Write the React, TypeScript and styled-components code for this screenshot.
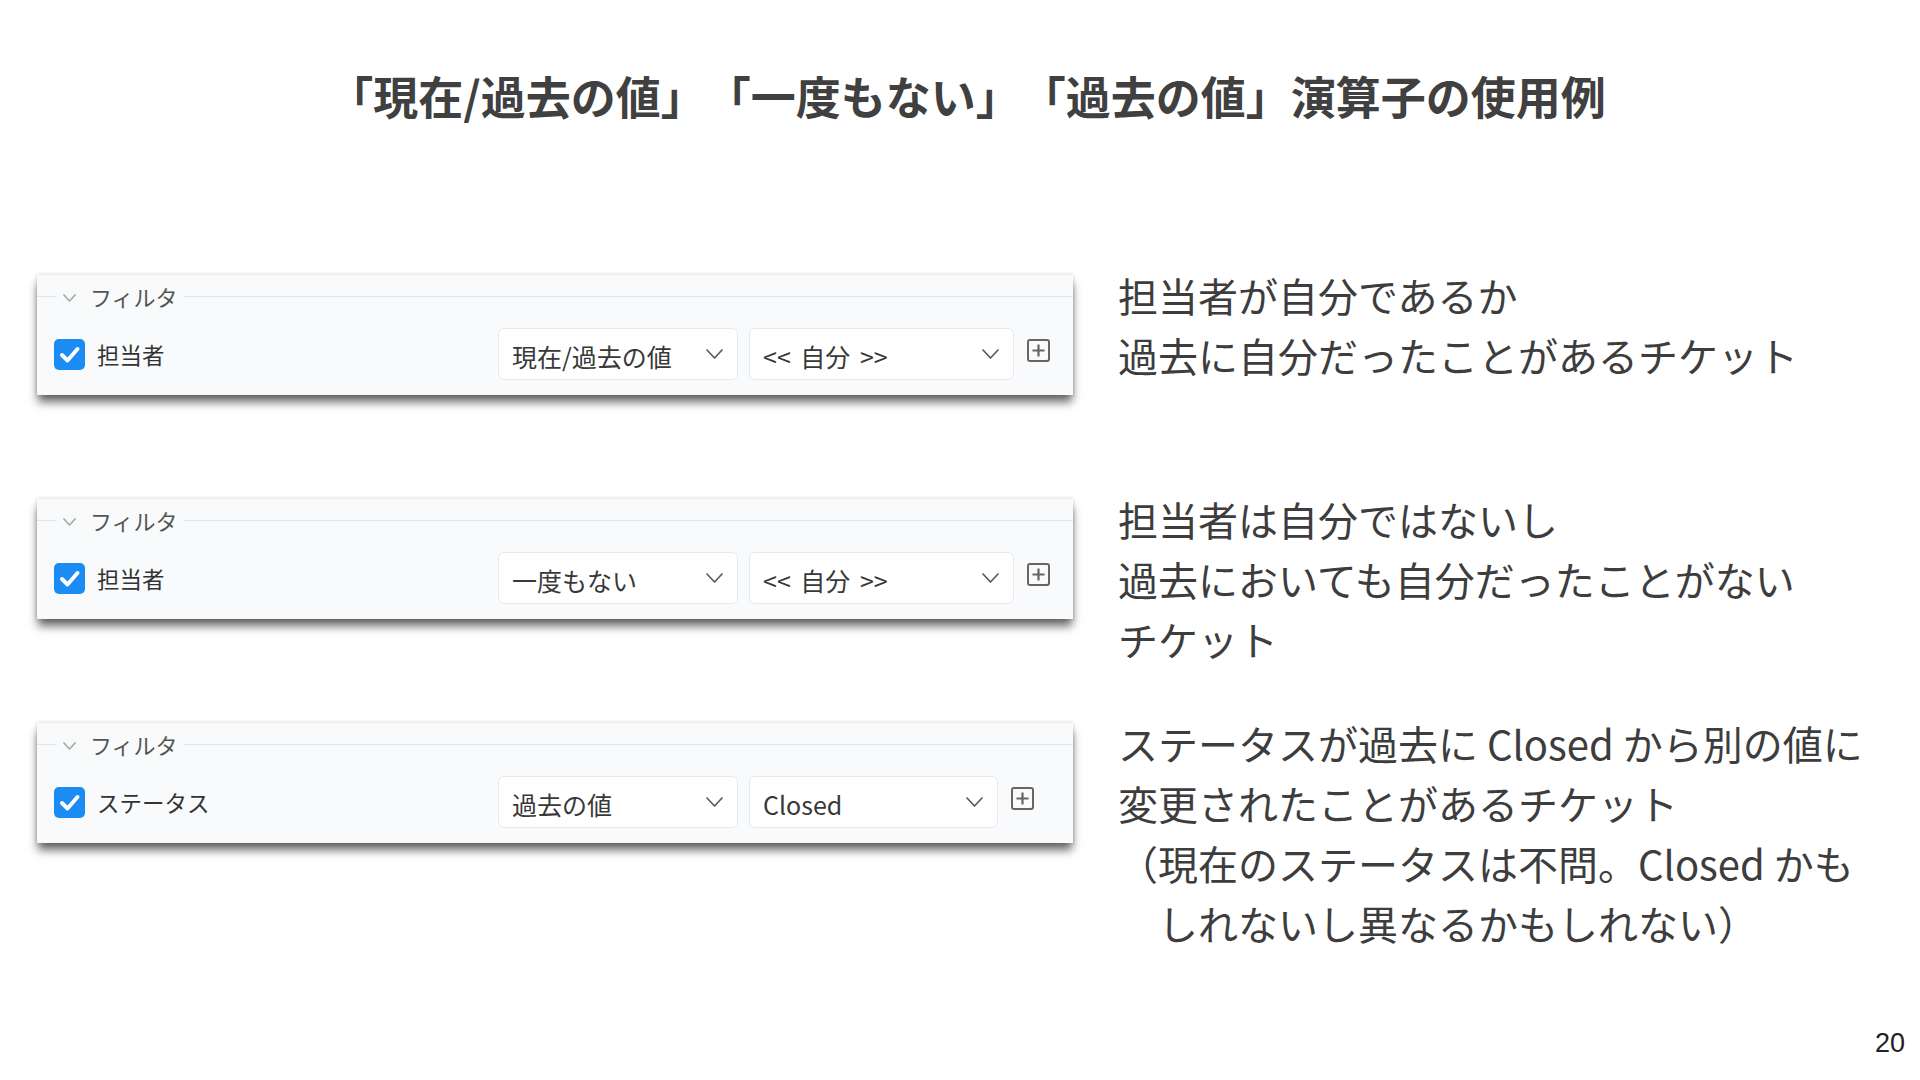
import React from "react";
import styled, { createGlobalStyle } from "styled-components";

const GlobalStyle = createGlobalStyle`
  html, body {
    margin: 0;
    padding: 0;
    background: #fff;
  }
  body {
    font-family: "Noto Sans CJK JP", "Noto Sans", sans-serif;
    color: #3b3b3b;
  }
`;

const Slide = styled.div`
  width: 1920px;
  height: 1080px;
  box-sizing: border-box;
  padding-top: 72px;
  display: flex;
  flex-direction: column;
  overflow: hidden;
`;

const Title = styled.h1`
  margin: 0;
  padding-left: 14px;
  font-size: 45px;
  line-height: 48px;
  font-weight: 700;
  color: #404040;
  text-align: center;
  white-space: nowrap;
  text-spacing-trim: space-all;
`;

const Examples = styled.div`
  margin-top: 145px;
  padding-left: 37px;
  display: grid;
  grid-template-columns: 1036px 1fr;
  grid-auto-rows: 224px;
  column-gap: 45px;
`;

const Panel = styled.div`
  margin-top: 10px;
  height: 120px;
  box-sizing: border-box;
  background: #f9fafb;
  box-shadow: 0 8px 9px -1px rgba(0, 0, 0, 0.6), 0 0 4px rgba(0, 0, 0, 0.18);
`;

const LegendRow = styled.div`
  display: flex;
  align-items: center;
  height: 22px;
  padding-top: 10px;
`;

const Rule = styled.div<{ $grow?: boolean }>`
  height: 1px;
  background: #e1e4e8;
  width: 20px;
  flex: ${(p) => (p.$grow ? "1" : "none")};
`;

const Legend = styled.div`
  display: flex;
  align-items: center;
  gap: 14px;
  padding: 0 6px;
  font-size: 22px;
  line-height: 22px;
  color: #555;
  & > svg {
    margin-top: 3px;
  }
`;

const FilterRow = styled.div`
  display: flex;
  align-items: center;
  height: 52px;
  margin-top: 21px;
  padding-left: 17px;
`;

const LabelCell = styled.label`
  width: 444px;
  flex: none;
  display: flex;
  align-items: center;
  gap: 12px;
  font-size: 22.5px;
  color: #333;
`;

const CheckBox = styled.span`
  width: 31px;
  height: 31px;
  border-radius: 5px;
  background: #1b8cf4;
  display: flex;
  align-items: center;
  justify-content: center;
`;

const Select = styled.div<{ $width: number }>`
  width: ${(p) => p.$width}px;
  height: 52px;
  box-sizing: border-box;
  flex: none;
  display: flex;
  align-items: center;
  justify-content: space-between;
  padding: 0 14px 0 13px;
  border: 1px solid #e5e9ed;
  border-radius: 6px;
  background: #fff;
  font-size: 25px;
  color: #383838;
  & + & {
    margin-left: 11px;
  }
`;

const SelectText = styled.span`
  padding-top: 4px;
  white-space: nowrap;
  word-spacing: 4px;
`;

const AddButton = styled.span`
  display: flex;
  margin-left: 13px;
  margin-top: -7px;
`;

const Description = styled.div`
  font-size: 40px;
  line-height: 60px;
  color: #3d3d3d;
  white-space: nowrap;
`;

const Footer = styled.div`
  margin-top: auto;
  padding: 0 15px 23px 0;
  text-align: right;
  font-family: "Liberation Sans", Arial, sans-serif;
  font-size: 27px;
  line-height: 27px;
  color: #222;
`;

const Chevron = ({ w, h, color }: { w: number; h: number; color: string }) => (
  <svg width={w} height={h} viewBox={`0 0 ${w} ${h}`} fill="none">
    <path
      d={`M1 1 L${w / 2} ${h - 1} L${w - 1} 1`}
      stroke={color}
      strokeWidth={1.7}
      strokeLinecap="round"
      strokeLinejoin="round"
    />
  </svg>
);

const CheckMark = () => (
  <svg width="31" height="31" viewBox="0 0 31 31" fill="none">
    <path
      d="M8 16 L13.5 21.5 L23.5 10"
      stroke="#fff"
      strokeWidth={3.9}
      strokeLinecap="round"
      strokeLinejoin="round"
    />
  </svg>
);

const PlusSquare = () => (
  <svg width="23" height="23" viewBox="0 0 23 23" fill="none">
    <rect x="1" y="1" width="21" height="21" rx="2" stroke="#666" strokeWidth="2" />
    <path d="M11.5 5.5 V17.5 M5.5 11.5 H17.5" stroke="#666" strokeWidth="2.2" />
  </svg>
);

type Example = {
  field: string;
  operator: string;
  value: string;
  valueWidth: number;
  lines: string[];
};

const examples: Example[] = [
  {
    field: "担当者",
    operator: "現在/過去の値",
    value: "<< 自分 >>",
    valueWidth: 265,
    lines: ["担当者が自分であるか", "過去に自分だったことがあるチケット"],
  },
  {
    field: "担当者",
    operator: "一度もない",
    value: "<< 自分 >>",
    valueWidth: 265,
    lines: ["担当者は自分ではないし", "過去においても自分だったことがない", "チケット"],
  },
  {
    field: "ステータス",
    operator: "過去の値",
    value: "Closed",
    valueWidth: 249,
    lines: [
      "ステータスが過去に Closed から別の値に",
      "変更されたことがあるチケット",
      "（現在のステータスは不問。Closed かも",
      "　しれないし異なるかもしれない）",
    ],
  },
];

const FilterPanel = ({ ex }: { ex: Example }) => (
  <Panel>
    <LegendRow>
      <Rule />
      <Legend>
        <Chevron w={13} h={8} color="#aaa" />
        フィルタ
      </Legend>
      <Rule $grow />
    </LegendRow>
    <FilterRow>
      <LabelCell>
        <CheckBox>
          <CheckMark />
        </CheckBox>
        {ex.field}
      </LabelCell>
      <Select $width={240}>
        <SelectText>{ex.operator}</SelectText>
        <Chevron w={17} h={10} color="#5a5a5a" />
      </Select>
      <Select $width={ex.valueWidth}>
        <SelectText>{ex.value}</SelectText>
        <Chevron w={17} h={10} color="#5a5a5a" />
      </Select>
      <AddButton>
        <PlusSquare />
      </AddButton>
    </FilterRow>
  </Panel>
);

export default function App() {
  return (
    <>
      <GlobalStyle />
      <Slide>
        <Title>「現在/過去の値」「一度もない」「過去の値」演算子の使用例</Title>
        <Examples>
          {examples.map((ex, i) => (
            <React.Fragment key={i}>
              <FilterPanel ex={ex} />
              <Description>
                {ex.lines.map((l, j) => (
                  <div key={j}>{l}</div>
                ))}
              </Description>
            </React.Fragment>
          ))}
        </Examples>
        <Footer>20</Footer>
      </Slide>
    </>
  );
}
